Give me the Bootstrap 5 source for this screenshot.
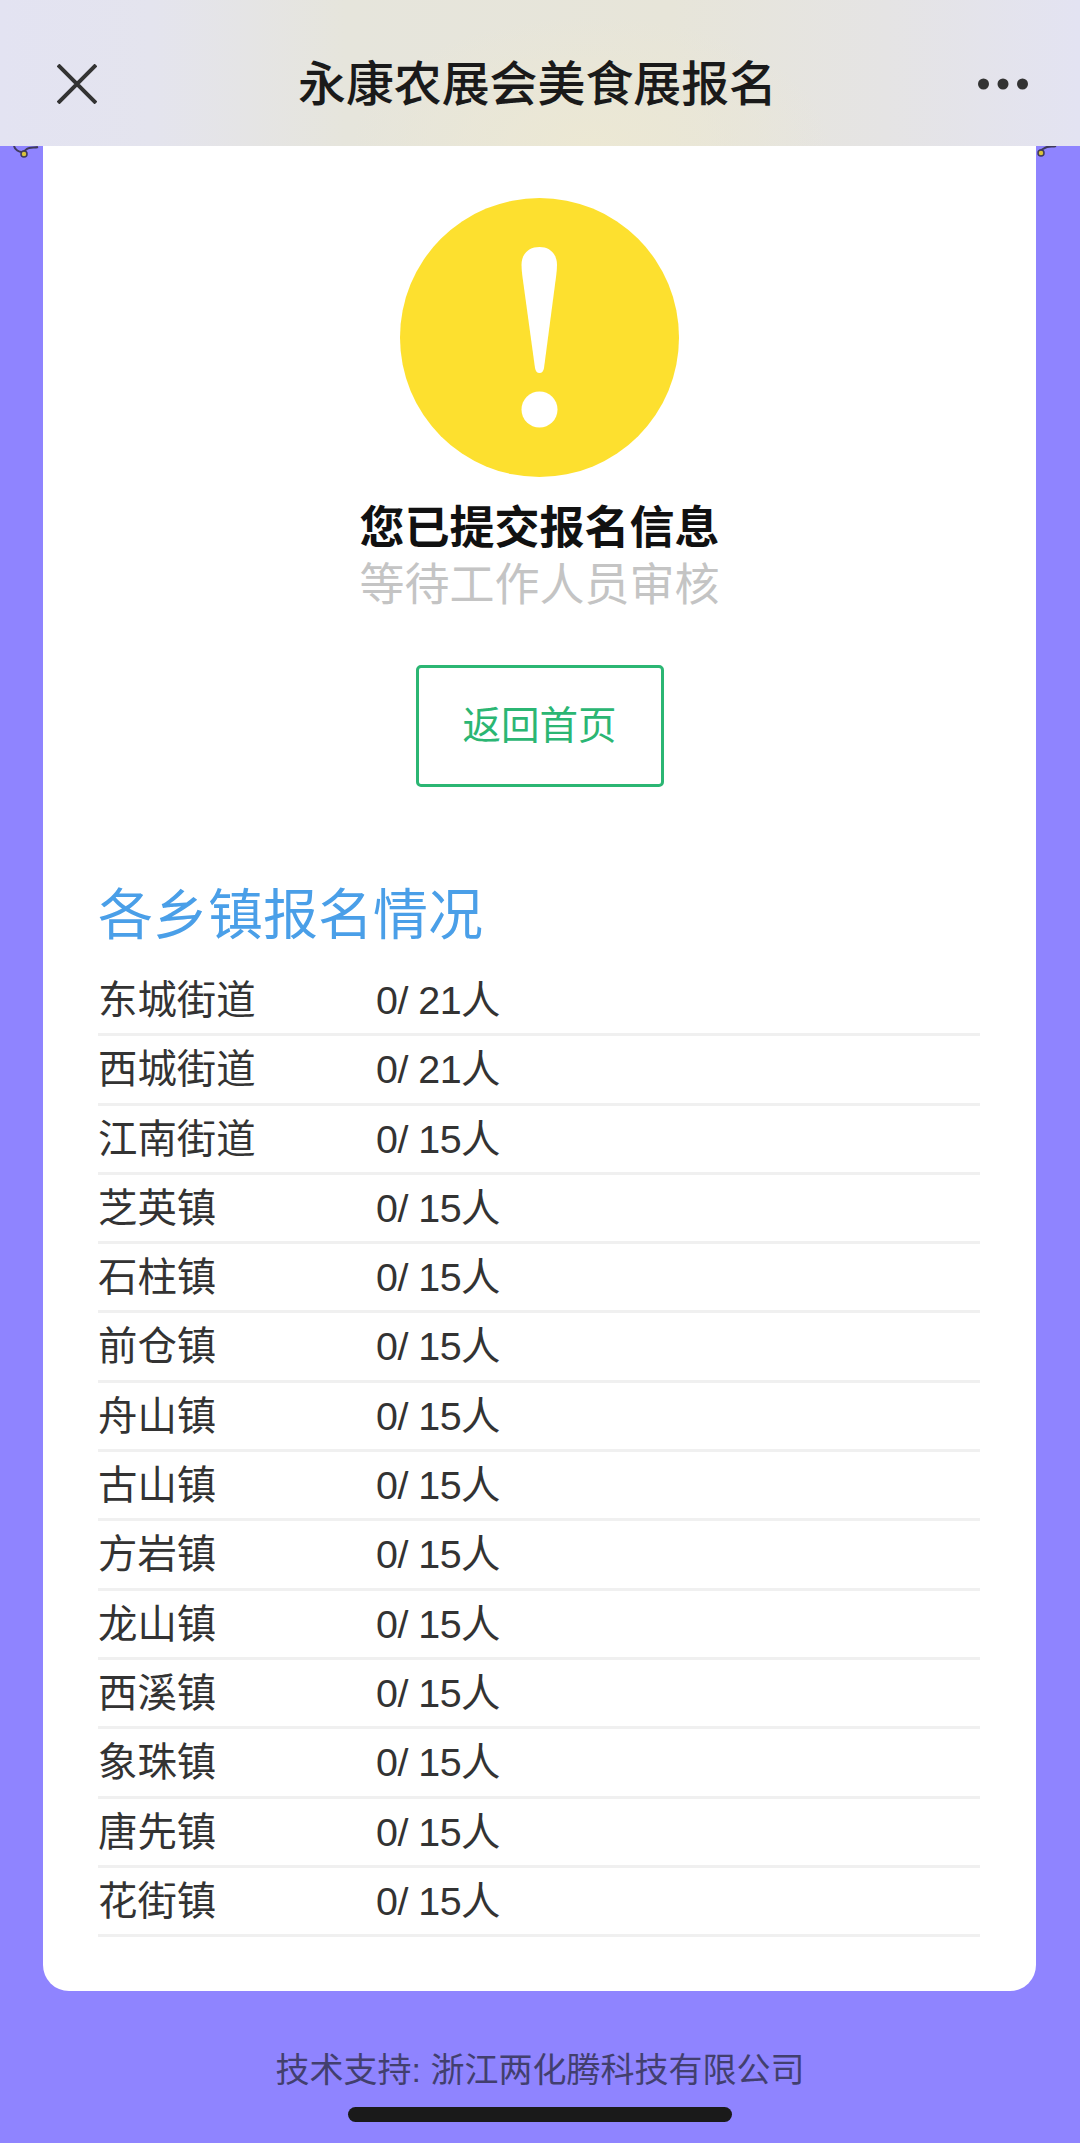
<!DOCTYPE html>
<html lang="zh">
<head>
  <meta charset="utf-8">
  <title>永康农展会美食展报名</title>
  <link href="https://cdn.jsdelivr.net/npm/bootstrap@5.3.1/dist/css/bootstrap.min.css" rel="stylesheet">
  <style>
    html, body { height: 2143px; }
    body {
      background: #8f84ff;
      font-family: "Liberation Sans", "Noto Sans CJK SC", sans-serif;
      color: #333;
      overflow: hidden;
    }
    .top-bar {
      height: 146px;
      padding: 0 52px 0 57px;
      background:
        radial-gradient(ellipse 240px 130px at 590px 146px, #ece8d4 0%, rgba(236,232,212,0) 100%),
        linear-gradient(90deg, #e3e3f2 0%, #e4e4ee 14%, #e6e5dc 32%, #e7e5d9 62%, #e5e4e4 82%, #e3e3f2 100%);
      position: relative;
      z-index: 2;
    }
    .top-title { font-size: 47.9px; font-weight: 500; color: #1a1a1a; line-height: 1; margin-top: 23px; }
    .top-icon { margin-top: 22px; }
    .corner-row { height: 0; padding: 0 22px 0 13px; }
    .main-card {
      margin: 0 44px 0 43px;
      height: 1845px;
      background: #fff;
      border-radius: 0 0 26px 26px;
      padding-top: 52px;
      position: relative;
      z-index: 1;
    }
    .warn-circle { width: 279px; height: 279px; display: block; }
    .done-title { font-size: 45px; font-weight: 700; color: #111; line-height: 57px; margin-top: 23px; }
    .done-sub { font-size: 45px; color: #c4c4c4; line-height: 57px; }
    .back-link {
      width: 248px;
      height: 122px;
      margin-top: 51px;
      border: 3px solid #2bb673;
      border-radius: 5px;
      color: #2bb673;
      font-size: 38.5px;
      text-decoration: none;
    }
    .town-box { padding: 0 56px 0 55px; margin-top: 88.5px; }
    .town-heading { font-size: 55px; color: #4a9fe8; line-height: 78px; margin: 0 0 13.5px; font-weight: 400; }
    .town-row {
      height: 69.3px;
      border-bottom: 3px solid #f0f0f0;
      font-size: 39.4px;
      line-height: 1;
      padding-top: 14px;
    }
    .town-name { width: 278px; }
    .town-count { letter-spacing: -0.5px; }
    .foot-text { font-size: 34px; color: #423f6e; line-height: 40px; margin-top: 59px; }
    .home-bar { width: 384px; height: 15px; background: #1a1a1a; border-radius: 8px; margin: 17px auto 0; }
  </style>
</head>
<body>
  <div class="top-bar d-flex align-items-center justify-content-between">
    <svg class="top-icon" width="40" height="40" viewBox="0 0 40 40"><path d="M1 1 39 39M39 1 1 39" stroke="#333" stroke-width="4" fill="none"/></svg>
    <div class="top-title">永康农展会美食展报名</div>
    <svg class="top-icon" width="50" height="12" viewBox="0 0 50 12" fill="#333"><circle cx="5.5" cy="6" r="5.5"/><circle cx="25" cy="6" r="5.5"/><circle cx="44.5" cy="6" r="5.5"/></svg>
  </div>

  <div class="corner-row d-flex justify-content-between align-items-start">
    <svg width="26" height="14" viewBox="0 0 26 14" fill="none" stroke="#3f3a5c" stroke-width="2"><path d="M1 0c1 4 5 6 8 6 3 0 3-3 7-4 3-1 6 0 9-1"/><circle cx="11" cy="8" r="3" fill="#d8c23a" stroke-width="1.5"/></svg>
    <svg width="22" height="14" viewBox="0 0 22 14" fill="none" stroke="#3f3a5c" stroke-width="2"><path d="M3 5c3-1 5-3 8-4 3-1 6 0 9-1"/><circle cx="5" cy="7" r="3" fill="#d8c23a" stroke-width="1.5"/></svg>
  </div>

  <div class="main-card">
    <div class="d-flex flex-column align-items-center text-center">
      <svg class="warn-circle" viewBox="0 0 279 279">
        <circle cx="139.5" cy="139.5" r="139.5" fill="#fde02f"/>
        <path d="M139.5 49c-11 0-18 7-18 18 0 4 .5 8 1 12L135 170c.5 3 2 5 4.5 5s4-2 4.5-5L156 79c.5-4 1-8 1-12 0-11-7-18-17.5-18z" fill="#fff"/>
        <circle cx="139.5" cy="211.5" r="18" fill="#fff"/>
      </svg>
      <div class="done-title">您已提交报名信息</div>
      <div class="done-sub">等待工作人员审核</div>
      <a href="#" class="back-link d-flex align-items-center justify-content-center">返回首页</a>
    </div>

    <div class="town-box">
      <h2 class="town-heading">各乡镇报名情况</h2>
      <div id="townList"></div>
    </div>
  </div>

  <div class="foot-text text-center">技术支持: 浙江两化腾科技有限公司</div>
  <div class="home-bar"></div>

  <script src="https://cdn.jsdelivr.net/npm/bootstrap@5.3.1/dist/js/bootstrap.bundle.min.js"></script>
  <script>
    const towns = [
      ["东城街道", 21], ["西城街道", 21], ["江南街道", 15], ["芝英镇", 15], ["石柱镇", 15],
      ["前仓镇", 15], ["舟山镇", 15], ["古山镇", 15], ["方岩镇", 15], ["龙山镇", 15],
      ["西溪镇", 15], ["象珠镇", 15], ["唐先镇", 15], ["花街镇", 15]
    ];
    document.getElementById("townList").innerHTML = towns.map(t =>
      `<div class="town-row d-flex"><div class="town-name">${t[0]}</div><div class="town-count">0/ ${t[1]}人</div></div>`
    ).join("");
  </script>
</body>
</html>
